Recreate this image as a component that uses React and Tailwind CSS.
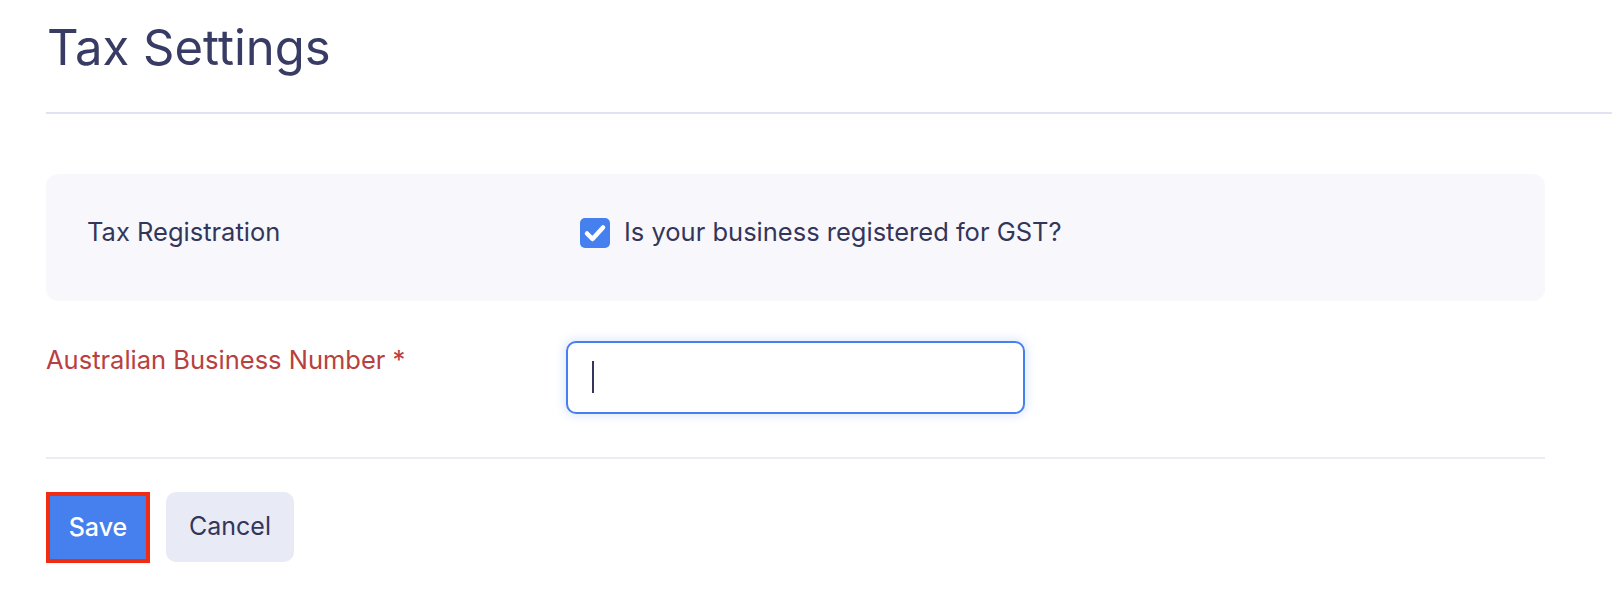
import React from 'react';

const App = () => {
  return (
    <div className="min-h-[590px] w-full bg-white font-['Inter',sans-serif] text-[#33365a]">
      <div className="pl-[47px] pt-[18px] pb-[34px]">
        <h1 className="text-[49px] leading-[60px] font-normal text-[#383b63]">Tax Settings</h1>
      </div>
      <div className="ml-[46px] h-[2px] bg-[#e0e2f2]" />

      <div className="pl-[46px] pr-[67px] pt-[60px]">
        <div className="flex h-[127px] items-center rounded-[12px] bg-[#f8f8fc] pl-[41px] pb-[10px]">
          <div className="w-[493px] text-[25.5px]">Tax Registration</div>
          <label className="flex items-center gap-[14px] text-[25.5px]">
            <span className="flex h-[30px] w-[30px] shrink-0 items-center justify-center rounded-[5px] bg-[#4680ee]">
              <svg className="h-[24px] w-[24px]" viewBox="0 0 24 24" fill="none">
                <path d="M4 12.5l5.5 5.5L20 6.5" stroke="white" strokeWidth="4.5" strokeLinecap="round" strokeLinejoin="round" />
              </svg>
            </span>
            Is your business registered for GST?
          </label>
        </div>

        <div className="flex pt-[40px] pb-[43px]">
          <div className="w-[520px] text-[25.5px] text-[#b8403f]">Australian Business Number *</div>
          <div className="relative h-[73px] w-[459px] rounded-[10px] border-2 border-[#4680ee] bg-white shadow-[0_0_8px_3px_rgba(70,128,238,0.15)]">
            <span className="absolute left-[24px] top-[18px] h-[32px] w-[2px] bg-[#33365a]" />
          </div>
        </div>

        <div className="h-[2px] bg-[#ececf6]" />

        <div className="flex gap-[16px] pt-[33px]">
          <button className="h-[71px] w-[104px] border-4 border-[#f02d12] bg-[#4680ee] text-[25px] font-medium text-white">
            Save
          </button>
          <button className="h-[70px] w-[128px] rounded-[10px] bg-[#e8eaf5] text-[25px] text-[#33365a]">
            Cancel
          </button>
        </div>
      </div>
    </div>
  );
};

export default App;
